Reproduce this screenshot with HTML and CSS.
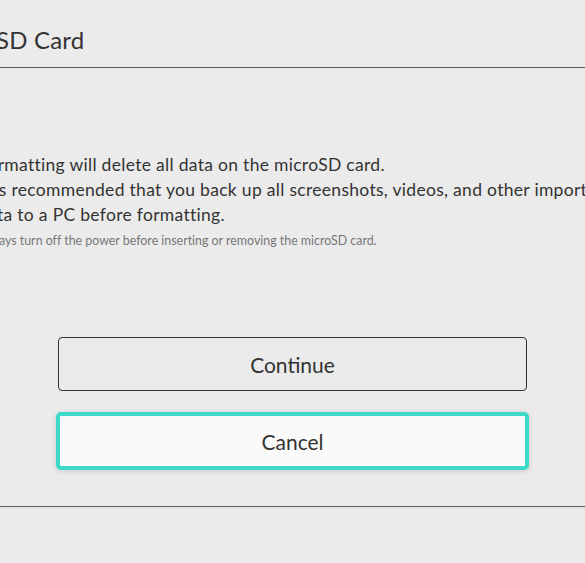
FILE: index.html
```
<!DOCTYPE html>
<html lang="en">
<head>
  <meta charset="UTF-8">
  <title>Format microSD Card</title>
  <link rel="stylesheet" href="styles.css">
</head>
<body>

  <div class="dialog">
    <header>
      <h2>Format microSD Card</h2>
    </header>

    <div class="content">
      <p class="lead">Formatting will delete all data on the microSD card.<br>
        It is recommended that you back up all screenshots, videos, and other important<br>
        data to a PC before formatting.</p>
      <p class="note">Always turn off the power before inserting or removing the microSD card.</p>
    </div>

    <div class="actions">
      <button class="btn">Continue</button>
      <button class="btn selected">Cancel</button>
    </div>

    <footer></footer>
  </div>

</body>
</html>
```

FILE: styles.css
```
body {
  font-family: 'Lato', sans-serif;
  font-variant-ligatures: none;
  margin: 0;
  padding: 0;
  background: #ebebeb;
  color: #333;
  overflow: hidden;
}

.dialog {
  width: 585px;
  height: 563px;
}

header {
  height: 68px;
  border-bottom: 1px solid #5a5a5a;
  box-sizing: border-box;
}

h2 {
  margin: 0 0 0 -146px;
  padding-top: 25px;
  font-size: 24px;
  line-height: 30px;
  font-weight: 400;
  letter-spacing: 0.2px;
  white-space: nowrap;
}

.content {
  margin-left: -22px;
  padding-top: 84px;
  height: 185px;
  white-space: nowrap;
}

.lead {
  margin: 0;
  font-size: 17.5px;
  line-height: 25px;
  letter-spacing: 0.3px;
}

.note {
  margin: 7px 0 0;
  font-size: 12.4px;
  line-height: 14px;
  color: #777;
}

.actions {
  display: flex;
  flex-direction: column;
  align-items: center;
  gap: 21px;
  height: 169px;
}

.btn {
  font-family: inherit;
  font-size: 21px;
  color: #333;
  cursor: pointer;
  box-sizing: border-box;
  width: 469px;
  height: 54px;
  background: #ebebeb;
  border: 1.5px solid #333;
  border-radius: 4px;
}

.btn.selected {
  width: 473px;
  height: 58px;
  background: #fafafa;
  border: 4px solid #3ddac9;
  border-radius: 5px;
  box-shadow: 0 1px 5px rgba(0,0,0,0.15);
}

footer {
  border-top: 1px solid #5a5a5a;
  box-shadow: 0 2px 0 #dedede;
}
```
